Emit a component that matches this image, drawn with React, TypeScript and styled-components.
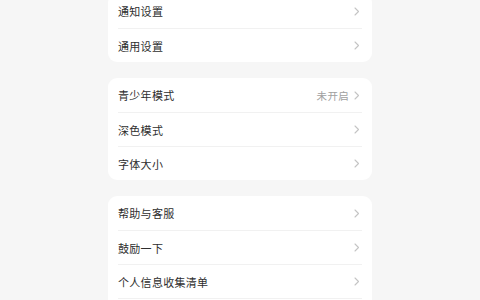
import React from 'react';
import styled, {createGlobalStyle} from "styled-components";

const GlobalStyle = createGlobalStyle`
    html, body {
        margin: 0;
        padding: 0;
        background: #f6f6f6;
        font-family: "Noto Sans CJK SC", "Noto Sans", sans-serif;
    }
`

type Item = { label: string, value?: string }

const groups: Item[][] = [
    [{label: "通知设置"}, {label: "通用设置"}],
    [{label: "青少年模式", value: "未开启"}, {label: "深色模式"}, {label: "字体大小"}],
    [{label: "帮助与客服"}, {label: "鼓励一下"}, {label: "个人信息收集清单"}, {label: ""}],
]

const Chevron = () => (
    <svg width="6" height="9" viewBox="0 0 6 9">
        <polyline points="1,1 4.5,4.5 1,8" fill="none" stroke="#c4c4c4" strokeWidth="1.1" strokeLinecap="round" strokeLinejoin="round"/>
    </svg>
)

export default function App() {
    return (
        <>
            <GlobalStyle/>
            <S_Page>
                {groups.map((group, gi) => (
                    <S_Card key={gi}>
                        {group.map((item, i) => (
                            <S_Row key={i}>
                                <S_Label>{item.label}</S_Label>
                                {item.label && (
                                    <S_Right>
                                        {item.value && <S_Value>{item.value}</S_Value>}
                                        <Chevron/>
                                    </S_Right>
                                )}
                            </S_Row>
                        ))}
                    </S_Card>
                ))}
            </S_Page>
        </>
    );
}

const S_Page = styled.div`
    width: 264px;
    margin: -6px auto 0;
    display: flex;
    flex-direction: column;
    gap: 16px;
    height: 306px;
    overflow: hidden;
`

const S_Card = styled.div`
    background: #ffffff;
    border-radius: 9px;
    padding: 0 10px;
`

const S_Row = styled.div`
    height: 34px;
    display: flex;
    align-items: center;
    justify-content: space-between;
    box-sizing: border-box;

    & + & {
        border-top: 1px solid #f1f1f1;
    }
`

const S_Label = styled.span`
    font-size: 11px;
    color: #2e2e2e;
    letter-spacing: 0.3px;
`

const S_Right = styled.div`
    display: flex;
    align-items: center;
    gap: 5px;
    padding-right: 2px;
`

const S_Value = styled.span`
    font-size: 10.5px;
    color: #a0a0a0;
    letter-spacing: 0.3px;
`
